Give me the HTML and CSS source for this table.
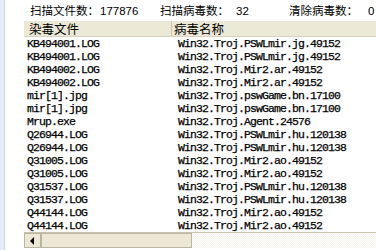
FILE: index.html
```html
<!DOCTYPE html>
<html>
<head>
<meta charset="utf-8">
<link rel="stylesheet" href="styles.css">
</head>
<body>
<div class="page">
  <div class="strip"></div>
  <div class="main">
    <div class="stats">
      <span class="stat s1"><span class="cn w1">扫描文件数：</span><span class="num">177876</span></span>
      <span class="stat s2"><span class="cn w2">扫描病毒数：</span><span class="num">32</span></span>
      <span class="stat s3"><span class="cn w3">清除病毒数：</span><span class="num">0</span></span>
    </div>
    <div class="list">
      <div class="head">
        <div class="hc c1">染毒文件</div>
        <div class="hc c2">病毒名称</div>
      </div>
      <div class="rows">
        <div class="row"><span class="f">KB494001.LOG</span><span class="v">Win32.Troj.PSWLmir.jg.49152</span></div>
        <div class="row"><span class="f">KB494001.LOG</span><span class="v">Win32.Troj.PSWLmir.jg.49152</span></div>
        <div class="row"><span class="f">KB494002.LOG</span><span class="v">Win32.Troj.Mir2.ar.49152</span></div>
        <div class="row"><span class="f">KB494002.LOG</span><span class="v">Win32.Troj.Mir2.ar.49152</span></div>
        <div class="row"><span class="f">mir[1].jpg</span><span class="v">Win32.Troj.pswGame.bn.17100</span></div>
        <div class="row"><span class="f">mir[1].jpg</span><span class="v">Win32.Troj.pswGame.bn.17100</span></div>
        <div class="row"><span class="f">Mrup.exe</span><span class="v">Win32.Troj.Agent.24576</span></div>
        <div class="row"><span class="f">Q26944.LOG</span><span class="v">Win32.Troj.PSWLmir.hu.120138</span></div>
        <div class="row"><span class="f">Q26944.LOG</span><span class="v">Win32.Troj.PSWLmir.hu.120138</span></div>
        <div class="row"><span class="f">Q31005.LOG</span><span class="v">Win32.Troj.Mir2.ao.49152</span></div>
        <div class="row"><span class="f">Q31005.LOG</span><span class="v">Win32.Troj.Mir2.ao.49152</span></div>
        <div class="row"><span class="f">Q31537.LOG</span><span class="v">Win32.Troj.PSWLmir.hu.120138</span></div>
        <div class="row"><span class="f">Q31537.LOG</span><span class="v">Win32.Troj.PSWLmir.hu.120138</span></div>
        <div class="row"><span class="f">Q44144.LOG</span><span class="v">Win32.Troj.Mir2.ao.49152</span></div>
        <div class="row"><span class="f">Q44144.LOG</span><span class="v">Win32.Troj.Mir2.ao.49152</span></div>
      </div>
      <div class="hscroll">
        <div class="btn"><svg width="5" height="8" viewBox="0 0 5 8"><path d="M4 0 L0 4 L4 8 Z" fill="#000"/></svg></div>
        <div class="thumb"></div>
        <div class="track"></div>
      </div>
    </div>
  </div>
</div>
</body>
</html>
```
FILE: styles.css
```css
html, body {
  margin: 0;
  padding: 0;
  background: #fff;
  width: 376px;
  height: 250px;
  overflow: hidden;
}
.page {
  display: flex;
  height: 250px;
}
.strip {
  width: 4px;
  background: #e6ecf5;
  border-right: 1px solid #c9d2e0;
  flex: none;
}
.main {
  flex: 1;
  margin-left: 19px;
  display: flex;
  flex-direction: column;
  min-width: 0;
}
.stats {
  height: 20px;
  display: flex;
  align-items: center;
  padding-left: 6px;
  color: #000;
  white-space: nowrap;
}
.stat { display: inline-flex; align-items: baseline; }
.s1 { width: 130px; }
.s2 { width: 129px; }
.cn {
  font-family: "Noto Sans CJK SC", sans-serif;
  font-size: 11.5px;
  display: inline-block;
}
.w1 { width: 70px; }
.w2 { width: 76px; }
.w3 { width: 79px; }
.num {
  font-family: "Liberation Sans", Arial, sans-serif;
  font-size: 11.5px;
}
.list {
  display: flex;
  flex-direction: column;
}
.head {
  height: 15px;
  margin-top: 1px;
  display: flex;
  background: #ebe8d6;
  border-bottom: 1px solid #d6d2bf;
  font-family: "Noto Sans CJK SC", sans-serif;
  font-size: 12.5px;
  line-height: 15px;
  color: #000;
}
.hc { white-space: nowrap; }
.c1 {
  width: 142px;
  padding-left: 5px;
  border-right: 1px solid #c8c4b0;
  flex: none;
}
.c2 { padding-left: 2px; }
.rows {
  height: 195px;
  overflow: hidden;
}
.row {
  height: 13px;
  display: grid;
  grid-template-columns: 148px 1fr;
  font-family: "Liberation Mono", "DejaVu Sans Mono", monospace;
  font-size: 11.5px;
  letter-spacing: -0.9px;
  line-height: 13px;
  color: #000;
  white-space: nowrap;
  -webkit-text-stroke: 0.25px #000;
}
.f { padding-left: 3px; }
.v { padding-left: 6px; }
.hscroll {
  height: 15px;
  display: flex;
  border-top: 1px solid #c8c4b0;
}
.btn {
  width: 17px;
  flex: none;
  background: #ebe8d6;
  border: 1px solid #b9b5a2;
  box-sizing: border-box;
  display: flex;
  align-items: center;
  justify-content: center;
}
.thumb {
  width: 151px;
  flex: none;
  background: #ebe8d6;
  border: 1px solid #b9b5a2;
  box-sizing: border-box;
}
.track {
  flex: 1;
  background-color: #f4f2ea;
  background-image:
    linear-gradient(45deg, #fff 25%, transparent 25%, transparent 75%, #fff 75%),
    linear-gradient(45deg, #fff 25%, transparent 25%, transparent 75%, #fff 75%);
  background-size: 2px 2px;
  background-position: 0 0, 1px 1px;
}
```
